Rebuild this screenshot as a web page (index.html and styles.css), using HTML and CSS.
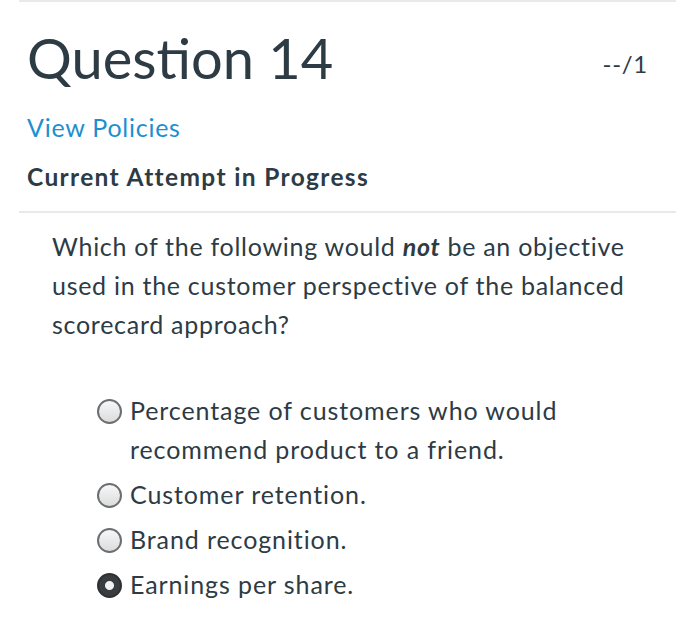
FILE: index.html
```html
<!DOCTYPE html>
<html>
<head>
<meta charset="utf-8">
<link rel="stylesheet" href="styles.css">
</head>
<body>
<div class="page">
  <div class="header">
    <h1 class="title">Question 14</h1>
    <span class="score">--/1</span>
  </div>
  <a class="policies">View Policies</a>
  <div class="attempt">Current Attempt in Progress</div>
  <div class="question">
    <p class="prompt">Which of the following would <em class="neg">not</em> be an objective used in the customer perspective of the balanced scorecard approach?</p>
    <ul class="options">
      <li class="option"><span class="radio"></span><span class="label">Percentage of customers who would recommend product to a friend.</span></li>
      <li class="option"><span class="radio"></span><span class="label">Customer retention.</span></li>
      <li class="option"><span class="radio"></span><span class="label">Brand recognition.</span></li>
      <li class="option"><span class="radio checked"></span><span class="label">Earnings per share.</span></li>
    </ul>
  </div>
</div>
</body>
</html>
```
FILE: styles.css
```css
html, body { margin: 0; padding: 0; background: #fff; }
body { font-family: Lato, "Open Sans", sans-serif; color: #2d3b45; }
.page {
  margin: 0 24px 0 19px;
  border-top: 2px solid #e8e9ea;
  padding: 0 0 0 8px;
}
.header {
  display: flex;
  justify-content: space-between;
  align-items: flex-start;
  margin-top: 18px;
  padding-right: 28px;
}
.title {
  margin: 0;
  font-weight: 400;
  font-size: 56px;
  line-height: 76px;
}
.score {
  font-size: 24px;
  letter-spacing: 0.7px;
  margin-top: 29px;
}
.policies {
  display: block;
  color: #1d8fcf;
  font-size: 25px;
  letter-spacing: 0.75px;
  margin-top: 14px;
  line-height: 34px;
}
.attempt {
  font-weight: 700;
  font-size: 24.5px;
  letter-spacing: 1.35px;
  line-height: 34px;
  margin-top: 16px;
  padding-bottom: 17px;
  margin-left: -8px;
  padding-left: 8px;
  border-bottom: 2px solid #e8e9ea;
}
.question { padding-left: 25px; padding-right: 30px; }
.prompt {
  font-size: 25px;
  letter-spacing: 0.72px;
  line-height: 39px;
  margin: 14px 0 0 0;
}
.neg { font-weight: 700; font-style: italic; }
.options {
  list-style: none;
  margin: 47px 0 0 0;
  padding: 0 0 0 45px;
}
.option {
  display: flex;
  align-items: flex-start;
  font-size: 25px;
  letter-spacing: 0.9px;
  line-height: 39px;
  margin-bottom: 6px;
}
.radio {
  flex: none;
  width: 21px;
  height: 21px;
  border-radius: 50%;
  border: 2px solid #6b6f72;
  background: linear-gradient(#f7f7f7, #dcdcdc);
  margin: 8px 8px 0 0;
  box-sizing: content-box;
}
.radio.checked {
  background: radial-gradient(circle, #f2f2f2 0 4px, #3a3d40 5px);
  border-color: #2e3134;
}
```
